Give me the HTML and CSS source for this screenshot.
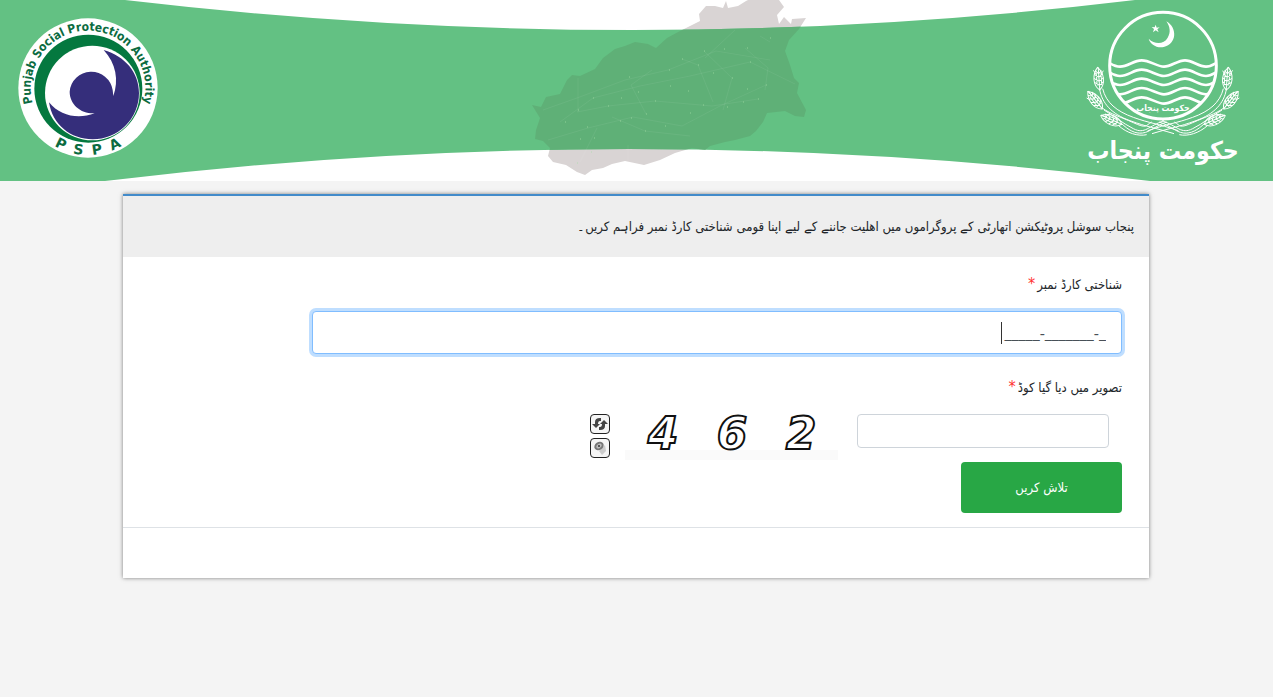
FILE: index.html
```html
<!DOCTYPE html>
<html lang="ur" dir="rtl">
<head>
  <meta charset="UTF-8">
  <meta name="viewport" content="width=device-width, initial-scale=1">
  <title>PSPA</title>
  <link rel="stylesheet" href="styles.css">
</head>
<body>
  <header class="banner" dir="ltr">
    <svg class="banner-bg" viewBox="0 0 1273 181" preserveAspectRatio="none" aria-hidden="true">
      <defs>
        <path id="band" d="M0 0H125Q636 60 1135 0H1273V181H1150Q630 117 105 181H0Z"/>
        <path id="map" d="M532 105L541 107L546 97L560 94L567 80L572 75L580 76L595 69L603 58L615 49L625 46L635 42L648 44L656 48L667 38L680 31L690 26L700 21L699 14L706 6L715 6L723 8L726 1L728 8L738 6L746 1L748 0H779L784 7L777 15L779 24L784 17L791 24L792 19L806 18L799 29L789 40L785 51L790 65L794 78L799 83L797 93L806 110L804 117L795 116L785 111L767 113L763 122L756 131L750 136L735 140L725 142L710 146L705 150L692 148L675 153L660 160L644 165L625 161L612 164L603 168L592 170L585 175L577 172L566 165L553 162L548 156L550 148L543 141L535 139L536 130L540 118Z"/>
        <clipPath id="bandClip"><use href="#band"/></clipPath>
      </defs>
      <use class="map-outer" href="#map"/>
      <use class="band" href="#band"/>
      <g clip-path="url(#bandClip)">
        <use class="map-inner" href="#map"/>
      </g>
      <path class="map-lines" d="M578 78V112M543 110L577 98L625 80L668 70L716 51L770 60M560 122L593 98L640 86L690 76L750 62L795 84M548 140L588 128L633 117L682 126L720 106L766 85M577 112L608 106L655 101L712 106L758 99M628 145V160M597 128L580 162M682 59L698 65L713 102M652 70L631 85L646 114M745 48L768 68L765 90M704 51L732 78L723 110M612 117L645 131L690 136M760 36L770 42M735 30L705 58"/>
      <path class="map-dots" d="M578 110h1M608 106h1M629 77h1M669 70h1M682 59h1M698 65h1M713 73h1M750 62h1M747 48h1M732 78h1M747 89h1M766 85h1M758 99h1M727 107h1M703 105h1M690 113h1M655 101h1M638 92h1M621 98h1M646 114h1M665 126h1M645 131h1M631 118h1M620 121h1M587 127h1M594 138h1M565 122h1M580 139h1M577 163h1M593 98h1M724 49h1M704 51h1M670 86h1M688 91h1M591 152h1M770 38h1M743 102h1"/>
    </svg>

    <svg class="logo-pspa" viewBox="54 54 420 420" role="img" aria-label="PSPA">
      <defs>
        <path id="nameArc" d="M264 436A172 172 0 0 1 264 92A172 172 0 0 1 264 436"/>
        <path id="abbrArc" d="M63 264A201 201 0 0 0 465 264"/>
      </defs>
      <circle cx="264" cy="264" r="209" fill="#fff"/>
      <circle cx="265" cy="266" r="162" fill="#04783f"/>
      <circle cx="277" cy="279" r="142" fill="#fff"/>
      <path fill="#352e7b" d="M311 150C375 168 417 218 417 279A139 139 0 0 1 278 418C212 418 157 374 147 307C180 348 235 359 284 340C243 342 209 313 209 275A65 65 0 0 1 338 270L340 288C357 240 348 190 311 150Z"/>
      <text class="logo-name"><textPath href="#nameArc" startOffset="50%">Punjab Social Protection Authority</textPath></text>
      <text class="logo-abbr"><textPath href="#abbrArc" startOffset="50%">P&nbsp;&nbsp;S&nbsp;&nbsp;P&nbsp;&nbsp;A</textPath></text>
    </svg>

    <svg class="logo-punjab" viewBox="48 30 462 486" role="img" aria-label="حکومت پنجاب">
      <defs>
        <clipPath id="discClip"><circle cx="279" cy="197" r="160"/></clipPath>
        <path id="wave" d="M90 180C115 180 125 200 150 200S190 181 215 181S260 200 282 200S322 181 345 181S385 200 408 200S440 181 465 181"/>
        <g id="ear">
          <path d="M0 34C-20 20 -20 -14 -2 -34C18 -14 18 18 0 34Z"/>
          <path d="M0 34V-34M-14 10L0 20L13 10M-15 -2L0 8L14 -2M-13 -14L0 -4L12 -14M-9 -24L0 -15L9 -24M-7 20V-18M7 20V-18"/>
        </g>
        <g id="wheat">
          <use href="#ear" transform="translate(87 236) rotate(-4)"/>
          <use href="#ear" transform="translate(76 300) rotate(-38)"/>
          <use href="#ear" transform="translate(124 359) rotate(-66)"/>
          <path d="M89 268C96 310 125 342 180 362S250 382 312 401M98 266C108 308 140 334 190 352S260 370 325 392M98 325C122 342 150 350 190 368S225 378 245 366M102 330C135 350 155 368 190 386S235 378 282 362M154 370C175 390 195 402 218 399S255 378 290 366M146 377C170 399 205 410 230 404"/>
          <path d="M53 273L62 284M50 294L60 300M93 346L110 351M70 211L78 222M100 212L94 222"/>
        </g>
      </defs>
      <circle class="line-thick" cx="279" cy="197" r="160"/>
      <g class="waves" clip-path="url(#discClip)">
        <use href="#wave"/>
        <use href="#wave" y="28"/>
        <use href="#wave" y="55"/>
        <use href="#wave" y="83"/>
        <use href="#wave" y="111"/>
      </g>
      <path class="solid" d="M289 64C322 82 322 132 281 141C259 145 240 132 236 116C254 134 281 134 293 113C303 97 300 80 289 64Z"/>
      <path class="solid" d="M257 74L260 83L269 82L262 88L266 97L257 91L249 97L252 87L245 81L254 82Z"/>
      <text class="crest-text" x="279" y="334">حکومت پنجاب</text>
      <g class="line-thin">
        <use href="#wheat"/>
        <use href="#wheat" transform="translate(558 0) scale(-1 1)"/>
      </g>
      <text class="govt-text" x="279" y="478">حکومت پنجاب</text>
    </svg>
  </header>

  <main class="panel">
    <h1 class="panel-heading">پنجاب سوشل پروٹیکشن اتھارٹی کے پروگراموں میں اھلیت جاننے کے لیے اپنا قومی شناختی کارڈ نمبر فراہم کریں۔</h1>
    <form class="panel-body">
      <label class="form-label" for="cnic">شناختی کارڈ نمبر<span class="required">*</span></label>
      <div class="cnic-field">
        <input class="form-control cnic-input" type="text" id="cnic" dir="ltr" value="_____-_______-_">
        <span class="cnic-caret"></span>
      </div>

      <label class="form-label" for="captcha">تصویر میں دیا گیا کوڈ<span class="required">*</span></label>
      <div class="captcha-row">
        <input class="form-control captcha-input" type="text" id="captcha">
        <svg class="captcha-image" viewBox="0 0 213 46" role="img" aria-label="462">
          <rect x="0" y="36" width="213" height="10" fill="#fafafa"/>
          <text x="38" y="35">4</text>
          <text x="107" y="35">6</text>
          <text x="176" y="35">2</text>
        </svg>
        <div class="captcha-tools">
          <button class="icon-btn" type="button" aria-label="Refresh">
            <svg viewBox="0 0 18 18">
              <path d="M4 9V7Q4 3 9 3H10V6H9Q7 6 7 9H9L5 13L1 9ZM14 9V11Q14 15 9 15H8V12H9Q11 12 11 9H9L13 5L17 9Z"/>
            </svg>
          </button>
          <button class="icon-btn" type="button" aria-label="Audio">
            <svg viewBox="0 0 18 18">
              <path fill="#ccc" d="M8 12L14 6L15 12L11 16Z"/>
              <ellipse cx="8" cy="7" rx="5" ry="4" fill="#777" transform="rotate(-35 8 7)"/>
              <ellipse cx="8" cy="7" rx="3" ry="2" fill="#bbb" transform="rotate(-35 8 7)"/>
              <circle cx="8" cy="7" r="1" fill="#333"/>
            </svg>
          </button>
        </div>
      </div>
      <button class="search-btn" type="submit">تلاش کریں</button>
    </form>
    <div class="panel-footer"></div>
  </main>
</body>
</html>
```
FILE: styles.css
```css
* {
  box-sizing: border-box;
}
body {
  min-height: 100vh;
  margin: 0;
  background: #f4f4f4;
  color: #212529;
  font-family: "DejaVu Sans Condensed", "DejaVu Sans", sans-serif;
  font-size: 13px;
}

/* Banner */
.banner {
  position: relative;
  display: flex;
  justify-content: space-between;
  align-items: flex-start;
  height: 181px;
  padding: 10px 33px 0 18px;
  background: #fff;
}
.banner-bg {
  position: absolute;
  inset: 0;
  width: 100%;
  height: 100%;
}
.band {
  fill: #63c183;
}
.map-outer {
  fill: #d9d4d4;
}
.map-inner {
  fill: #5fb077;
}
.map-lines {
  fill: none;
  stroke: #fff;
  stroke-opacity: 0.06;
}
.map-dots {
  fill: none;
  stroke: #a5e0a5;
  stroke-opacity: 0.7;
}
.logo-pspa {
  position: relative;
  width: 140px;
  height: 140px;
  margin-top: 8px;
}
.logo-name,
.logo-abbr {
  fill: #0b6b41;
  font-weight: bold;
  text-anchor: middle;
}
.logo-name {
  font-family: "DejaVu Sans Condensed", "DejaVu Sans", sans-serif;
  font-size: 36px;
}
.logo-abbr {
  font-family: "DejaVu Sans", sans-serif;
  font-size: 42px;
}
.logo-punjab {
  position: relative;
  width: 154px;
  height: 162px;
}
.line-thick,
.waves,
.line-thin {
  fill: none;
  stroke: #fff;
}
.line-thick {
  stroke-width: 9px;
}
.waves {
  stroke-width: 8px;
}
.line-thin {
  stroke-width: 3px;
}
.solid,
.crest-text,
.govt-text {
  fill: #fff;
}
.crest-text,
.govt-text {
  font-weight: bold;
  text-anchor: middle;
}
.crest-text {
  font-size: 26px;
}
.govt-text {
  font-size: 74px;
}

/* Panel */
.panel {
  margin: 13px 124px 0 123px;
  background: #fff;
  border-top: 2px solid #428bca;
  box-shadow: 0 0 4px rgba(0, 0, 0, 0.5);
}
.panel-heading {
  margin: 0;
  padding: 0 15px;
  background: #eee;
  font-size: 13px;
  font-weight: normal;
  line-height: 61px;
}
.panel-body {
  padding: 12px 27px 14px;
}
.form-label {
  display: block;
  margin-bottom: 10px;
  line-height: 32px;
}
.required {
  margin-right: 2px;
  color: #f33;
  font-size: 16px;
  line-height: 1;
}
.form-control {
  display: block;
  padding: 0 15px;
  background: #fff;
  border: 1px solid #ced4da;
  border-radius: 4px;
  font-size: 16px;
}
.cnic-field {
  position: relative;
  width: 83.33%;
  margin-bottom: 18px;
}
.cnic-input {
  width: 100%;
  height: 43px;
  border-color: #80bdff;
  box-shadow: 0 0 0 3px #bfdeff;
  color: #495057;
  font-family: "Open Sans", sans-serif;
  text-align: right;
  outline: none;
}
/* Caret sits before the first blank of the mask */
.cnic-caret {
  position: absolute;
  top: 11px;
  right: 120px;
  width: 1px;
  height: 22px;
  background: #333;
}
.captcha-row {
  display: flex;
  align-items: flex-start;
  margin: 0 13px 2px 0;
}
.captcha-input {
  width: 252px;
  height: 34px;
}
.captcha-image {
  width: 213px;
  height: 46px;
  margin: 0 19px 0 15px;
  overflow: visible;
}
.captcha-image text {
  fill: #fff;
  stroke: #111;
  stroke-width: 2px;
  font-family: "DejaVu Sans", sans-serif;
  font-size: 44px;
  font-style: italic;
  font-weight: bold;
  text-anchor: middle;
}
.captcha-tools {
  display: flex;
  flex-direction: column;
  gap: 4px;
}
.icon-btn {
  width: 20px;
  height: 20px;
  padding: 0;
  background: #f5f5f5;
  border: 1px solid #222;
  border-radius: 4px;
  cursor: pointer;
}
.icon-btn svg {
  display: block;
  width: 18px;
  height: 18px;
  fill: #444;
}
.search-btn {
  display: block;
  width: 161px;
  height: 51px;
  background: #28a745;
  border: 0;
  border-radius: 4px;
  color: #fff;
  font-family: inherit;
  font-size: 13px;
  cursor: pointer;
}
.search-btn:hover {
  background: #218838;
}
.panel-footer {
  height: 51px;
  border-top: 1px solid #dee2e6;
}
```
